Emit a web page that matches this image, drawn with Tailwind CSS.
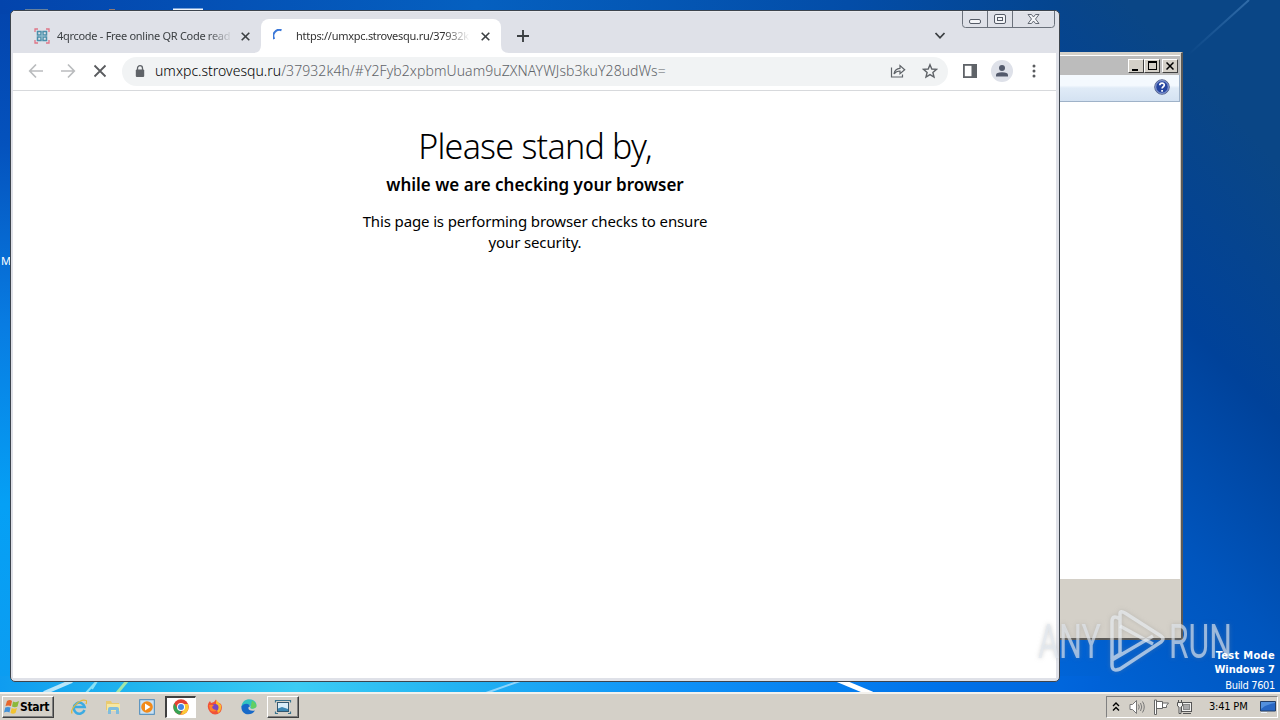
<!DOCTYPE html>
<html lang="en">
<head>
<meta charset="utf-8">
<title>Desktop</title>
<script src="https://cdn.jsdelivr.net/npm/@tailwindcss/browser@4"></script>
</head>
<body class="relative h-[720px] w-[1280px] overflow-hidden bg-[#0054bc] font-['Noto_Sans',sans-serif] text-black">
<!-- wallpaper -->
<svg class="absolute inset-0" width="1280" height="720" viewBox="0 0 1280 720">
  <defs>
    <linearGradient id="left" x1="0" y1="0" x2="0" y2="1"><stop offset="0" stop-color="#0344ac"/><stop offset=".2" stop-color="#0452bd"/><stop offset=".45" stop-color="#087ce2"/><stop offset=".7" stop-color="#05a0f5"/><stop offset="1" stop-color="#0d9cf0"/></linearGradient>
    <linearGradient id="right" x1="0" y1="1" x2=".35" y2="0"><stop offset="0" stop-color="#0068de"/><stop offset=".4" stop-color="#0055bd"/><stop offset=".68" stop-color="#00429a"/><stop offset="1" stop-color="#0a4686"/></linearGradient>
    <linearGradient id="top"><stop offset="0" stop-color="#0344ac"/><stop offset=".45" stop-color="#0560c0"/><stop offset=".8" stop-color="#034da8"/><stop offset="1" stop-color="#04458f"/></linearGradient>
    <linearGradient id="bottom"><stop offset="0" stop-color="#0f9cf0"/><stop offset=".12" stop-color="#20b4ee"/><stop offset=".27" stop-color="#3cccf4"/><stop offset=".42" stop-color="#22b2f2"/><stop offset=".6" stop-color="#1093f8"/><stop offset=".85" stop-color="#0073ea"/><stop offset="1" stop-color="#0062d8"/></linearGradient>
    <linearGradient id="ray" x1="0" y1="1" x2="1" y2="0"><stop offset="0" stop-color="#4a85c0" stop-opacity="0"/><stop offset="1" stop-color="#4a85c0" stop-opacity=".6"/></linearGradient>
  </defs>
  <rect width="40" height="720" fill="url(#left)"/>
  <rect x="1040" width="240" height="720" fill="url(#right)"/>
  <rect width="1060" height="14" fill="url(#top)"/>
  <rect y="676" width="1100" height="18" fill="url(#bottom)"/>
  <path d="M1188 55 1249 0" stroke="url(#ray)" stroke-width="2"/>
  <path d="M44 693 72 681" stroke="#b9e6fa" stroke-width="4"/><path d="M86 693 97 681M92 689 97 681" stroke="#8be0f4" stroke-width="2"/><path d="M117 693 127 681" stroke="#a3e6a8" stroke-width="3"/>
  <path d="M486 693 520 681" stroke="#8ed5fb" stroke-width="2"/><path d="M836 679 872 694" stroke="#fff" stroke-width="5"/>
  <path d="M25 10H48" stroke="#8a9698" stroke-width="1.500"/><path d="M173 9.500H203" stroke="#eef4fb" stroke-width="2"/><path d="M109 10H115" stroke="#c08a60" stroke-width="1.500"/>
</svg>
<div class="absolute top-[254px] left-px text-[11px] leading-[14px] text-white">M</div>

<!-- background window -->
<section class="absolute top-[52px] left-[1000px] flex h-[588px] w-[183px] flex-col border-t border-r-2 border-b-2 border-t-[#d4d0c8] border-r-[#5c5a57] border-b-[#5c5a57] bg-[#d4d0c8] pt-0.5 pr-px">
  <div class="flex h-[20px] items-center justify-end border-t border-white bg-[#bcbcbc] pr-[2px]">
    <div class="flex h-[14px] w-4 items-end border border-t-white border-r-[#404040] border-b-[#404040] border-l-white bg-[#d4d0c8] pb-px pl-[3px]"><i class="block h-0.5 w-[6px] bg-black"></i></div>
    <div class="flex h-[14px] w-4 items-center justify-center border border-t-white border-r-[#404040] border-b-[#404040] border-l-white bg-[#d4d0c8]"><i class="block h-[9px] w-[9px] border border-t-2 border-black"></i></div>
    <div class="ml-0.5 flex h-[14px] w-4 items-center justify-center border border-t-white border-r-[#404040] border-b-[#404040] border-l-white bg-[#d4d0c8]"><svg width="8" height="8" viewBox="0 0 8 8"><path d="M.5.5 7.500 7.500M7.500.5.5 7.500" stroke="#000" stroke-width="1.500"/></svg></div>
  </div>
  <div class="flex h-[27px] justify-end border-r border-b border-[#9fb2c8] bg-linear-to-b from-[#f4f9fe] from-40% via-[#e0ebf7] via-50% to-[#d4e2f2] pt-[4px] pr-[9px]">
    <svg width="16" height="16" viewBox="0 0 16 16"><circle cx="8" cy="8" r="7.300" fill="#2646a0" stroke="#626f95"/><circle cx="8" cy="8" r="6.300" fill="none" stroke="#b3c2ec" stroke-width=".8"/><path d="M5.800 6.200C5.800 3.400 10.300 3.500 10.300 6 10.300 7.800 8.100 7.700 8.100 9.500M8.100 11V12.700" fill="none" stroke="#fff" stroke-width="1.700"/></svg>
  </div>
  <div class="h-[477px] bg-white"></div>
</section>

<!-- browser window -->
<main class="absolute top-[10px] left-[10px] flex h-[672px] w-[1050px] flex-col overflow-hidden rounded-[5px] border border-[#3d444d] bg-[#dfe1e8] pr-[3px] pb-[3px] pl-[2px]">
  <header class="relative flex h-[42px] shrink-0 items-end border-t border-[#e9ebf0]">
    <div class="flex h-[34px] w-[248px] items-center pl-[21px]">
      <svg width="16" height="16" viewBox="0 0 16 16" fill="none"><path d="M1 4V1H4M12 1H15V4M15 12V15H12M4 15H1V12" stroke="#df7587" stroke-width="1.300"/><path d="M3.500 3.500H7V7H3.500ZM9 3.500H12.500V7H9ZM3.500 9H7V12.500H3.500ZM9 9H12.500V12.500H9Z" stroke="#4a8faa" stroke-width="1.500"/><path d="M5 8H11M8 5V11" stroke="#87b7c9"/></svg>
      <span class="ml-[7px] w-[176px] overflow-hidden mask-r-from-85% text-[11px] leading-4 tracking-[-0.29px] whitespace-nowrap text-[#3c4043]">4qrcode - Free online QR Code read</span>
      <svg class="ml-[8px]" width="9" height="9" viewBox="0 0 9 9"><path d="M.7.7 8.300 8.300M8.300.7.7 8.300" stroke="#3c4043" stroke-width="1.600"/></svg>
    </div>
    <div class="relative flex h-[34px] w-[240px] items-center rounded-t-lg bg-white pl-[12px]">
      <svg class="absolute bottom-0 -left-2" width="256" height="8" viewBox="0 0 256 8"><path d="M0 8Q8 8 8 0V8ZM256 8Q248 8 248 0V8Z" fill="#fff"/></svg>
      <svg width="14" height="14" viewBox="0 0 14 14"><path d="M1.300 10A6 6 0 0 1 8.500 1.200" fill="none" stroke="#3b78d8" stroke-width="2"/></svg>
      <span class="ml-[9px] w-[174px] overflow-hidden mask-r-from-85% text-[11px] leading-4 tracking-[-0.28px] whitespace-nowrap text-[#333]">https://umxpc.strovesqu.ru/37932k</span>
      <svg class="ml-[11px]" width="9" height="9" viewBox="0 0 9 9"><path d="M.7.7 8.300 8.300M8.300.7.7 8.300" stroke="#3c4043" stroke-width="1.600"/></svg>
    </div>
    <svg class="mb-[11px] ml-[16px]" width="12" height="12" viewBox="0 0 12 12"><path d="M6 0V12M0 6H12" stroke="#3c4043" stroke-width="1.900"/></svg>
    <svg class="mb-[13px] ml-[405px]" width="12" height="8" viewBox="0 0 12 8"><path d="M1.500 1 6 5.800 10.500 1" fill="none" stroke="#3c4043" stroke-width="1.800"/></svg>
    <svg class="absolute -top-px right-[0px]" width="94" height="18" viewBox="0 0 94 18" fill="none" stroke="#6b717b"><path d="M.5 0V13.500Q.5 16.500 3.500 16.500H89.500Q92.500 16.500 92.500 13.500V0M25.500 0V16M50.500 0V16"/><rect x="7.500" y="8.500" width="11" height="4" rx="1.500" fill="#f3f4f7" stroke="#555b67"/><rect x="32.500" y="3.500" width="11" height="9" rx="1.500" fill="#f3f4f7" stroke="#555b67"/><rect x="35.500" y="6.500" width="5" height="3" stroke="#555b67"/><path d="M66 3.500H69.500L71.500 6 73.500 3.500H77L73.500 8 77 12.500H73.500L71.500 10 69.500 12.500H66L69.500 8Z" fill="#f3f4f7" stroke="#555b67" stroke-width=".9"/></svg>
  </header>
  <nav class="flex h-[38px] shrink-0 items-center border-b border-[#d7d9dc] bg-white pb-px pl-[15px]">
    <svg width="16" height="16" viewBox="0 0 16 16" fill="none" stroke="#babcbe" stroke-width="1.700"><path d="M15 8H2M8 1.500 1.700 8 8 14.500"/></svg>
    <svg class="ml-4" width="16" height="16" viewBox="0 0 16 16" fill="none" stroke="#babcbe" stroke-width="1.700"><path d="M1 8H14M8 1.500 14.300 8 8 14.500"/></svg>
    <svg class="ml-4" width="16" height="16" viewBox="0 0 16 16" fill="none" stroke="#5a5c5f" stroke-width="1.800"><path d="M2.500 2.500 13.500 13.500M13.500 2.500 2.500 13.500"/></svg>
    <div class="ml-[14px] flex h-[29px] w-[826px] items-center rounded-full bg-[#f1f3f4] pr-[10px] pl-[13px]">
      <svg width="10" height="13" viewBox="0 0 10 13"><path d="M2.500 5V3.200A2.500 2.500 0 0 1 7.500 3.200V5" fill="none" stroke="#5f6368" stroke-width="1.300"/><rect x=".8" y="4.500" width="8.400" height="7.500" rx="1" fill="#5f6368"/></svg>
      <span class="ml-[10px] w-[735px] text-[14px] leading-5 font-light tracking-[0.07px] whitespace-nowrap text-[#5f6368]"><b class="font-light tracking-[0.02px] text-black">umxpc.strovesqu.ru</b>/37932k4h/#Y2Fyb2xpbmUuam9uZXNAYWJsb3kuY28udWs=</span>
      <svg class="shrink-0" width="16" height="16" viewBox="0 0 16 16" fill="none" stroke="#5f6368" stroke-width="1.200"><path d="M1.500 4.500V14H12.500V11.500M4 11C4.500 7.500 6.500 5.500 10 5.300V2.500L14.700 6.700 10 10.800V8C7.300 8 5.500 9 4 11Z"/></svg>
      <svg class="ml-4 shrink-0" width="16" height="16" viewBox="0 0 16 16" fill="none" stroke="#5f6368" stroke-width="1.400"><path d="M8 1.700 9.800 6 14.500 6.400 10.900 9.500 12 14.100 8 11.600 4 14.100 5.100 9.500 1.500 6.400 6.200 6Z"/></svg>
    </div>
    <svg class="ml-[14px]" width="16" height="16" viewBox="0 0 16 16"><rect x="1.900" y="1.900" width="12.200" height="12.200" fill="none" stroke="#5f6368" stroke-width="1.800"/><path d="M9.500 1H15V15H9.500Z" fill="#5f6368"/></svg>
    <div class="ml-[13px] flex h-[22px] w-[22px] items-center justify-center rounded-full bg-[#dee1e9]"><svg width="14" height="14" viewBox="0 0 14 14" fill="#535a6c"><circle cx="7" cy="4" r="3"/><path d="M1 12.500V11Q1 8.300 7 8.300T13 11V12.500Z"/></svg></div>
    <svg class="ml-[19px]" width="4" height="14" viewBox="0 0 4 14" fill="#5a5c5f"><circle cx="2" cy="2" r="1.500"/><circle cx="2" cy="7" r="1.500"/><circle cx="2" cy="12" r="1.500"/></svg>
  </nav>
  <article class="flex grow flex-col items-center bg-white pt-[30px] pl-px">
    <h1 class="text-[34px] leading-[50px] font-light tracking-[-0.75px] whitespace-nowrap">Please stand by,</h1>
    <h2 class="mt-[2px] text-[17px] leading-6 font-semibold whitespace-nowrap">while we are checking your browser</h2>
    <p class="mt-[14px] w-[360px] text-center text-[15px] leading-[21px] tracking-[-0.13px]">This page is performing browser checks to ensure<br>your security.</p>
  </article>
</main>

<!-- watermark -->
<div class="absolute top-[609px] left-[1037px] flex h-[64px] w-[200px] items-center" aria-label="ANY RUN">
  <svg width="198" height="64" viewBox="0 0 198 64" font-family="Roboto" font-size="48" font-weight="400" fill="#e2e8f0" fill-opacity=".65" style="filter:drop-shadow(0 0 2px #8888)">
    <text x="1" y="49" textLength="63" lengthAdjust="spacingAndGlyphs">ANY</text>
    <text x="132" y="49" textLength="63" lengthAdjust="spacingAndGlyphs">RUN</text>
    <g fill="none" stroke="#edf1f6" stroke-opacity=".65" stroke-width="3.500" stroke-linejoin="round"><path d="M83 10Q75 5 75 13V50L83 45ZM83 39V5Q83 1 88 4L124 27Q128 30 124 33L83 60Q75 63 75 56V51L116 27"/><path d="M83 17 116 35"/></g>
  </svg>
</div>
<div class="absolute top-[649px] right-[5px] text-right font-['DejaVu_Sans_Condensed','DejaVu_Sans',sans-serif] text-[11px] leading-[14px] text-white">
  <p class="font-bold tracking-[0.3px]">Test Mode</p><p class="font-bold">Windows 7</p><p class="mt-0.5 tracking-[-0.35px]">Build 7601</p>
</div>

<!-- taskbar -->
<footer class="absolute bottom-0 left-0 flex h-7 w-full items-start border-t-2 border-[#f3f1ed] bg-[#d4d0c8] pt-0.5 pl-0.5">
  <button class="flex h-[22px] w-[52px] items-center border border-t-white border-r-[#404040] border-b-[#404040] border-l-white pl-px shadow-[inset_-1px_-1px_#808080]">
    <svg class="shrink-0" width="16" height="16" viewBox="0 0 16 16"><path d="M3 2Q6 0 8 2L7 7Q4 6 1.500 7Z" fill="#e7662b"/><path d="M9 2.500Q12 4 15 2L13.500 7.500Q11 9 8 7.500Z" fill="#8bb83a"/><path d="M1.300 8.500Q4 7.500 6.500 8.500L5.500 13.500Q3 12 0 13.500Z" fill="#4291d8"/><path d="M7.700 9Q10 10.500 13 9L11.500 14Q9 15.500 6.500 14Z" fill="#f2c330"/></svg>
    <span class="font-['DejaVu_Sans_Condensed','DejaVu_Sans',sans-serif] text-[12px] font-bold tracking-[-0.35px]">Start</span>
  </button>
  <div class="mt-[3px] ml-[17px] flex">
    <svg width="16" height="16" viewBox="0 0 16 16" fill="none"><path d="M13.500 11A5.500 5.500 0 1 1 13.700 8H4" stroke="#3cabe2" stroke-width="2.500"/><path d="M1 14.500C-1 10 9-1 15 1.500 16 2 15.500 4 15 5" stroke="#e3b83b" stroke-width="1.300"/></svg>
    <svg class="ml-[18px]" width="16" height="16" viewBox="0 0 16 16"><path d="M1 2H6L7 4H14V11H1Z" fill="#e9ca70"/><path d="M2 5H15V12H2Z" fill="#f6e7a1"/><path d="M3 15V10Q3 8 5 8H12Q14 8 14 10V15H11V11H6V15Z" fill="#80bddd"/></svg>
    <svg class="ml-[18px]" width="16" height="16" viewBox="0 0 16 16"><rect x=".7" y=".7" width="14.600" height="14.600" fill="#cbe2f4" stroke="#4487bb"/><circle cx="8" cy="8" r="5.800" fill="#f28a19"/><path d="M6 4.500 11.500 8 6 11.500Z" fill="#fff"/></svg>
  </div>
  <div class="ml-[10px] flex h-[22px] w-[31px] items-start justify-center border-t-2 border-r border-b border-l-2 border-t-[#404040] border-r-white border-b-white border-l-[#404040] bg-white pt-px">
    <svg width="16" height="16" viewBox="0 0 16 16"><circle cx="8" cy="8" r="7.700" fill="#e34133"/><path d="M1.300 4.200 5 10.500 8.500 11.500 7 15.600A7.700 7.700 0 0 1 1.300 4.200Z" fill="#36a353"/><path d="M15 5H8L11.300 9.500 7.500 15.700A7.700 7.700 0 0 0 15 5Z" fill="#fcc934"/><circle cx="8" cy="8" r="4" fill="#fff"/><circle cx="8" cy="8" r="3" fill="#4285e4"/></svg>
  </div>
  <svg class="mt-[3px] ml-[11px]" width="16" height="16" viewBox="0 0 16 16"><path d="M1.500 4 3 2 4 4 7 3 9 .5 10 3 14 5Q16 9 13.500 13 8 18 3 13-.5 9 1.500 4Z" fill="#f05238"/><path d="M9 1 14 6Q15 11 11 14L9 8Z" fill="#fdb92c"/><circle cx="8" cy="8.500" r="3.500" fill="#7847c1"/><path d="M2 6 7 6 5 8Q6 11 10 11 6 14 3 11Z" fill="#ff812d"/></svg>
  <svg class="mt-[3px] ml-[18px]" width="16" height="16" viewBox="0 0 16 16"><path d="M.5 8C1-2.500 15-1.500 15.500 6 15.500 9.500 11 10.500 9 9 10.500 6.500 8 5 6 5.500 4 6 2 7 .5 8Z" fill="#33c2c0"/><path d="M.4 7.500C4 3 9 5 9 7.500 6 8 7 13 14 11.500 10 18 0 16 .4 7.500Z" fill="#1769c8"/><path d="M11 1.500Q16 4 15.300 8 13 10 10 9.300L10 6Z" fill="#61cf62"/></svg>
  <div class="ml-[10px] flex h-[22px] w-[32px] items-center justify-center border border-t-white border-r-[#404040] border-b-[#404040] border-l-white shadow-[inset_-1px_-1px_#808080]">
    <svg width="18" height="16" viewBox="0 0 18 16"><rect x="3.500" y="3.500" width="11" height="9" fill="#d8edf9" stroke="#33576f"/><path d="M4 9.500 8 8 14 10V12H4Z" fill="#3b87b4"/><path d="M1.500 3.500V1.500H4M14 1.500H16.500V3.500M16.500 12.500V14.500H14M4 14.500H1.500V12.500M4 1.500H14" fill="none" stroke="#39738e" stroke-width="1.200"/></svg>
  </div>
  <div class="mr-0.5 ml-auto flex h-[22px] w-[172px] items-center border border-t-[#808080] border-r-white border-b-white border-l-[#808080] pl-[5px]">
    <svg width="8" height="10" viewBox="0 0 8 10" fill="none" stroke="#000" stroke-width="1.400"><path d="M1 4 4 1 7 4M1 8.500 4 5.500 7 8.500"/></svg>
    <svg class="ml-[9px]" width="16" height="16" viewBox="0 0 16 16" fill="none" stroke="#777"><path d="M1 5.500H3.500L7.500 1.500V14.500L3.500 10.500H1Z" fill="#fff"/><path d="M9.500 5.500Q11 8 9.500 10.500M11.500 4Q14 8 11.500 12M13.500 2.500Q17 8 13.500 13.500"/></svg>
    <svg class="ml-[8px]" width="16" height="16" viewBox="0 0 16 16" fill="#fff" stroke="#666"><path d="M1.500 1V15.500H3.500V1ZM3.500 2.500H9.500V9.500H3.500ZM9.500 4H15.500L13.500 6.500V8.500H9.500Z"/></svg>
    <svg class="ml-[7px]" width="17" height="16" viewBox="0 0 17 16" fill="#f1f1ef" stroke="#555"><rect x="5.500" y="3.500" width="10" height="9"/><rect x="7.500" y="5.500" width="6" height="5" fill="#aaa" stroke="#888"/><path d="M7 14.500H15M1.500 3.500H6.500V7L5 8V14.500H3V8L1.500 7ZM2.500 3V1M5.500 3V1"/></svg>
    <time class="ml-[16px] w-[41px] font-['DejaVu_Sans_Condensed','DejaVu_Sans',sans-serif] text-[11px] tracking-[-0.2px] whitespace-nowrap">3:41 PM</time>
    <svg class="ml-[10px]" width="16" height="14" viewBox="0 0 16 14"><path d="M.5 1.500H15.500V11H.5Z" fill="#2867c3" stroke="#233e66"/><path d="M1 9Q7 4 15 3V2H1Z" fill="#5390dd"/><path d="M1 12.500H7" stroke="#eef4fb"/></svg>
  </div>
</footer>
</body>
</html>
